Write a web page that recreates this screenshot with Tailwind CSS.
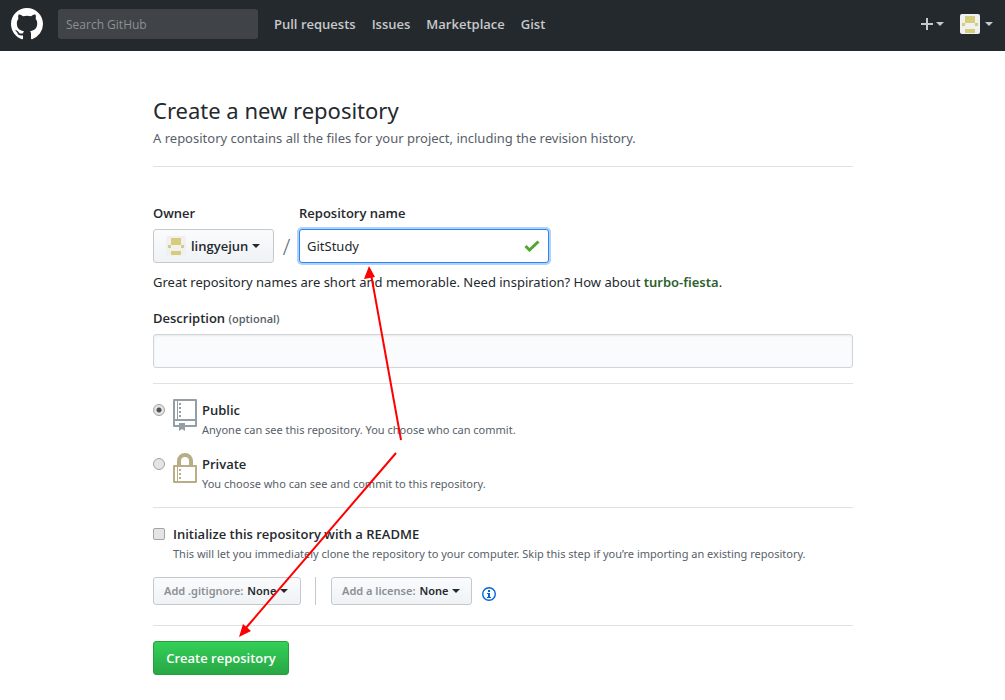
<!DOCTYPE html>
<html lang="en">
<head>
<meta charset="utf-8">
<meta name="viewport" content="width=device-width, initial-scale=1">
<title>Create a new repository</title>
<script src="https://cdn.jsdelivr.net/npm/@tailwindcss/browser@4"></script>
</head>
<body class="bg-white font-['Open_Sans','Noto_Sans',sans-serif] text-[13px] leading-5 text-[#24292e]">
<svg class="hidden" aria-hidden="true">
  <symbol id="identicon" viewBox="0 0 20 20">
    <rect width="20" height="20" rx="2" fill="#f0f0f0"/>
    <path fill="#d6cd7c" d="M5 2h10v6H5zM2 9h3v3H2zM15 9h3v3h-3zM5 8h10v1H5zM5 15h10v4H5z"/>
  </symbol>
  <symbol id="caret" viewBox="0 0 8 4"><path fill="currentColor" d="M0 0h8L4 4z"/></symbol>
</svg>

<header class="flex h-[51px] items-center bg-[#24292e] pr-3 pb-[3px] pl-[11px] text-white/75">
  <a href="#" aria-label="Homepage" class="text-white">
    <svg class="size-8" viewBox="0 0 16 16" fill="currentColor"><path fill-rule="evenodd" d="M8 0C3.58 0 0 3.58 0 8c0 3.54 2.29 6.53 5.47 7.59.4.07.55-.17.55-.38 0-.19-.01-.82-.01-1.49-2.01.37-2.53-.49-2.69-.94-.09-.23-.48-.94-.82-1.13-.28-.15-.68-.52-.01-.53.63-.01 1.08.58 1.23.82.72 1.21 1.87.87 2.33.66.07-.52.28-.87.51-1.07-1.78-.2-3.64-.89-3.64-3.95 0-.87.31-1.59.82-2.15-.08-.2-.36-1.02.08-2.12 0 0 .67-.21 2.2.82.64-.18 1.32-.27 2-.27.68 0 1.36.09 2 .27 1.53-1.04 2.2-.82 2.2-.82.44 1.1.16 1.92.08 2.12.51.56.82 1.27.82 2.15 0 3.07-1.87 3.75-3.65 3.95.29.25.54.73.54 1.48 0 1.07-.01 1.93-.01 2.2 0 .21.15.46.55.38A8.013 8.013 0 0 0 16 8c0-4.42-3.58-8-8-8z"/></svg>
  </a>
  <input type="search" aria-label="Search GitHub" placeholder="Search GitHub" class="ml-[15px] h-[30px] w-[200px] rounded-[3px] bg-[#404448] px-2 text-[12px] text-white outline-none placeholder:text-[#8e9093]">
  <nav class="ml-4 flex gap-4 font-semibold">
    <a href="#">Pull requests</a><a href="#">Issues</a><a href="#">Marketplace</a><a href="#">Gist</a>
  </nav>
  <div class="ml-auto flex items-center gap-4">
    <button type="button" aria-label="Create new" class="flex items-center gap-[3px]">
      <svg class="size-3" viewBox="0 0 12 12"><path fill="currentColor" d="M5 0h2v5h5v2H7v5H5V7H0V5h5z"/></svg>
      <svg class="h-1 w-2"><use href="#caret"/></svg>
    </button>
    <button type="button" aria-label="Your account" class="flex items-center gap-[5px]">
      <svg class="size-5"><use href="#identicon"/></svg>
      <svg class="h-1 w-2"><use href="#caret"/></svg>
    </button>
  </div>
</header>

<main class="relative mx-auto max-w-[701px] pt-[41px] pb-6 pl-px">
  <h1 class="font-['Noto_Sans','Open_Sans',sans-serif] text-[22px] leading-9">Create a new repository</h1>
  <p class="font-['Noto_Sans','Open_Sans',sans-serif] text-[#586069]">A repository contains all the files for your project, including the revision history.</p>
  <form>
    <div class="mt-[18px] border-t border-[#dfe2e5] pt-9">
      <div class="flex items-end">
        <div>
          <div id="owner-label" class="mb-[6px] font-semibold">Owner</div>
          <button type="button" aria-labelledby="owner-label owner-name" class="flex h-[34px] w-[121px] items-center rounded-[3px] border border-[#c6c9cc] bg-linear-to-b from-[#fafbfc] to-[#eff3f6] pl-3 font-semibold">
            <svg class="size-5"><use href="#identicon"/></svg>
            <span id="owner-name" class="ml-[5px]">lingyejun</span>
            <svg class="ml-1 h-1 w-2"><use href="#caret"/></svg>
          </button>
        </div>
        <span class="w-[25px] text-center text-[22px] leading-[34px] font-light text-[#586069]">/</span>
        <div>
          <label for="name" class="mb-[6px] block font-semibold">Repository name</label>
          <div class="relative">
            <input id="name" type="text" value="GitStudy" class="block h-[34px] w-[250px] rounded-[3px] border border-[#2188ff] bg-white pr-8 pl-[7px] font-['Noto_Sans','Open_Sans',sans-serif] ring-2 ring-[#0366d6]/30 outline-none">
            <svg class="absolute top-[11px] right-[9px] h-3 w-4" viewBox="0 0 16 12" aria-hidden="true"><path fill="none" stroke="#55a532" stroke-width="3" d="M1.5 6l4 4L14.5 1.5"/></svg>
          </div>
        </div>
      </div>
      <p class="mt-[9px] font-['Noto_Sans','Open_Sans',sans-serif]">Great repository names are short and memorable. Need inspiration? How about <strong class="font-semibold text-[#2e5f2c]">turbo-fiesta</strong>.</p>
      <label for="description" class="mt-4 block font-semibold">Description <span class="text-[11px] text-[#586069]">(optional)</span></label>
      <input id="description" type="text" class="mt-[5px] block h-[34px] w-full rounded-[3px] border border-[#d1d5da] bg-[#fafbfc] px-2 shadow-[inset_0_1px_2px_rgba(27,31,35,0.075)] outline-none">
    </div>

    <div class="mt-[15px] flex flex-col gap-[13px] border-t border-[#dfe2e5] pt-[15px]">
      <div class="flex">
        <input id="public" type="radio" name="visibility" checked class="mt-[5px] size-3 appearance-none rounded-full border border-[#a3a3a3] bg-[#e4e4e4] checked:bg-[radial-gradient(circle,#505050_0_2px,#e4e4e4_3px)]">
        <svg class="ml-2 h-8 w-6" viewBox="0 0 24 32" fill="#959da5" aria-hidden="true"><path fill-rule="evenodd" d="M1 0h22q1 0 1 1v26q0 1-1 1H12v4l-3-2-3 2v-4H1q-1 0-1-1V1q0-1 1-1zM2 2v18h2V2zM5 2v18h17V2zM2 22v4h4v-2h6v2h10v-4z"/><path d="M6 4h2v2H6zM6 8h2v2H6zM6 12h2v2H6zM6 16h2v2H6z"/></svg>
        <div class="ml-[5px] pt-px">
          <label for="public" class="block font-semibold">Public</label>
          <p class="font-['Noto_Sans','Open_Sans',sans-serif] text-[11px] text-[#586069]">Anyone can see this repository. You choose who can commit.</p>
        </div>
      </div>
      <div class="flex">
        <input id="private" type="radio" name="visibility" class="mt-[5px] size-3 appearance-none rounded-full border border-[#a3a3a3] bg-[#e4e4e4] checked:bg-[radial-gradient(circle,#505050_0_2px,#e4e4e4_3px)]">
        <svg class="ml-2 h-8 w-6" viewBox="0 0 24 32" fill="#b9ad86" aria-hidden="true"><path fill-rule="evenodd" d="M4 12V8a8 8 0 0 1 16 0v4h3q1 0 1 1v16q0 1-1 1H1q-1 0-1-1V13q0-1 1-1zM8 12h8V8a4 4 0 0 0-8 0zM2 14v14h2V14zM5 14v14h17V14z"/><path d="M6 16h2v2H6zM6 20h2v2H6zM6 24h2v2H6z"/></svg>
        <div class="ml-[5px] pt-px">
          <label for="private" class="block font-semibold">Private</label>
          <p class="font-['Noto_Sans','Open_Sans',sans-serif] text-[11px] text-[#586069]">You choose who can see and commit to this repository.</p>
        </div>
      </div>
    </div>

    <div class="mt-[13px] border-t border-[#dfe2e5] pt-4">
      <div class="flex">
        <input id="readme" type="checkbox" class="mt-1 size-3 appearance-none rounded-[2px] border border-[#a3a3a3] bg-[#e4e4e4] checked:bg-[#505050]">
        <div class="ml-2">
          <label for="readme" class="block font-semibold">Initialize this repository with a README</label>
          <p class="font-['Noto_Sans','Open_Sans',sans-serif] text-[11px] text-[#586069]">This will let you immediately clone the repository to your computer. Skip this step if you’re importing an existing repository.</p>
        </div>
      </div>
      <div class="mt-[13px] flex items-center">
        <button type="button" class="flex h-7 w-[148px] items-center rounded-[3px] border border-[#c6c9cc] bg-linear-to-b from-[#fafbfc] to-[#eff3f6] pl-[10px] font-['Noto_Sans','Open_Sans',sans-serif] text-[11px] font-semibold">
          <span class="font-semibold text-[#8b8f93]">Add .gitignore:</span><span class="ml-1">None</span>
          <svg class="ml-1 h-1 w-2"><use href="#caret"/></svg>
        </button>
        <div class="mx-[14px] h-7 w-[2px] border-l border-[#c6c9cc]"></div>
        <button type="button" class="flex h-7 w-[141px] items-center rounded-[3px] border border-[#c6c9cc] bg-linear-to-b from-[#fafbfc] to-[#eff3f6] pl-[10px] font-['Noto_Sans','Open_Sans',sans-serif] text-[11px] font-semibold">
          <span class="font-semibold text-[#8b8f93]">Add a license:</span><span class="ml-1">None</span>
          <svg class="ml-1 h-1 w-2"><use href="#caret"/></svg>
        </button>
        <a href="#" aria-label="License information" class="ml-[10px] pt-[5px] text-[#0366d6]">
          <svg class="size-[14px]" viewBox="0 0 14 14" fill="currentColor"><path fill-rule="evenodd" d="M6 3h2v2H6zM5 6h3v4h1v1H5v-1h1V7H5zM7 1.4a5.6 5.6 0 1 0 0 11.2A5.6 5.6 0 0 0 7 1.4zM7 0a7 7 0 1 1 0 14A7 7 0 0 1 7 0z"/></svg>
        </a>
      </div>
    </div>

    <div class="mt-5 border-t border-[#dfe2e5] pt-[15px]">
      <button type="submit" class="h-[34px] w-[136px] rounded-[3px] border border-[#269f42] bg-linear-to-b from-[#34d058] to-[#28a745] font-semibold text-white">Create repository</button>
    </div>
  </form>

  <svg class="pointer-events-none absolute top-[209px] left-px h-[380px] w-[260px]" viewBox="0 0 260 380" aria-hidden="true">
    <path fill="none" stroke="#f00" stroke-width="2" d="M248 180L218 14M243 193L92 369"/>
    <path fill="#f00" d="M216 6l-5 13 11-2zM86 377l4-13 8 7z"/>
  </svg>
</main>
</body>
</html>
